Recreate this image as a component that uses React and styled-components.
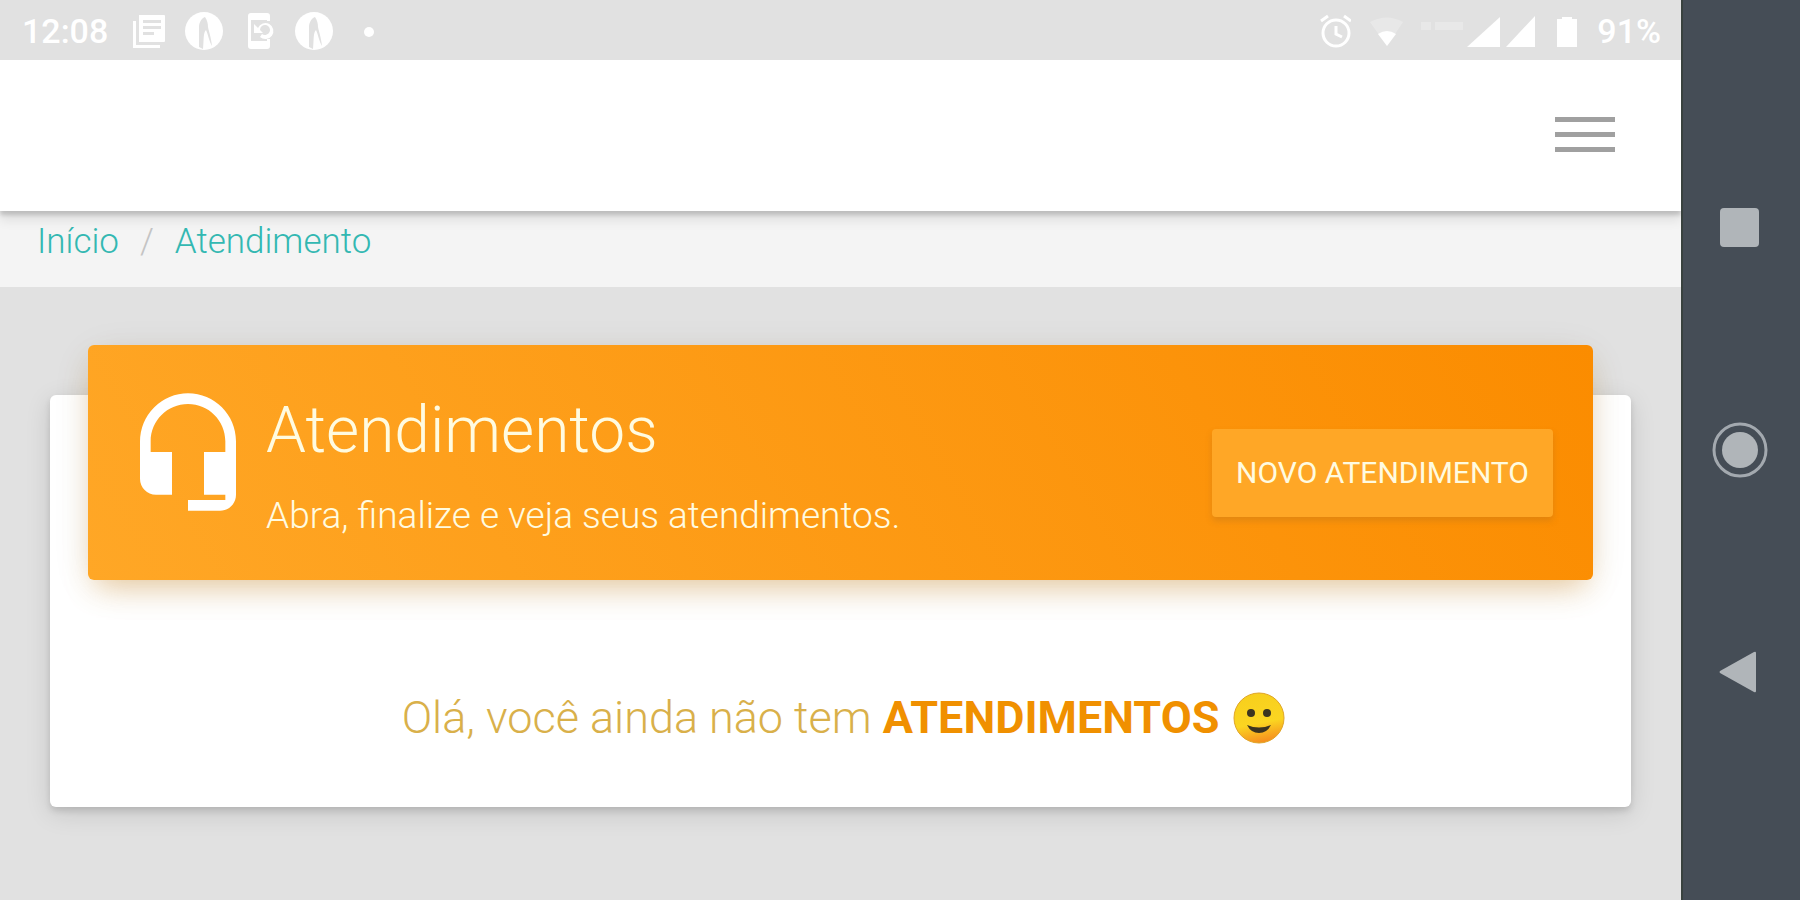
import React from 'react';
import styled, { createGlobalStyle } from 'styled-components';

function StatusBar() {
  return (
    <Status>
      <div className="group left">
        <time>12:08</time>
        <svg width="38" height="38" viewBox="0 0 38 38" aria-hidden="true">
          <path d="M3 9h3v24h24v3H3z" />
          <path
            fillRule="evenodd"
            d="M9 3h25a1 1 0 0 1 1 1v25a1 1 0 0 1-1 1H9zM13 8v3h18V8zM13 14v3h18v-3zM13 20v3h11v-3z"
          />
        </svg>
        <AppBadge />
        <svg width="38" height="38" viewBox="0 0 38 38" aria-hidden="true">
          <path d="M11 1h16a3 3 0 0 1 3 3v5h-3V8H11v21h16v-2h3v7a3 3 0 0 1-3 3H11a3 3 0 0 1-3-3V4a3 3 0 0 1 3-3z" />
          <path d="M14 12l4 4a8 8 0 1 1 2 9l2-3a5 5 0 1 0-2-4l3 3h-9z" />
        </svg>
        <AppBadge />
        <svg width="38" height="38" viewBox="0 0 38 38" aria-hidden="true">
          <circle cx="19" cy="20" r="5" />
        </svg>
      </div>

      <div className="group right">
        <svg width="34" height="34" viewBox="0 0 34 34" aria-hidden="true">
          <g fill="none" stroke="#fff" strokeWidth="3">
            <circle cx="19" cy="19" r="13" />
            <path d="M19 12v8l6 3M4 7l7-5M34 7l-7-5" />
          </g>
        </svg>
        <svg width="34" height="34" viewBox="0 0 34 34" aria-hidden="true">
          <path opacity="0.25" d="M1 8Q18-1 34 8L18 32z" />
          <path d="M9 20q9-6 18 0l-9 12z" />
        </svg>
        <div className="signals">
          <svg width="42" height="34" viewBox="0 0 42 34" aria-hidden="true">
            <path opacity="0.25" d="M0 8h10v8H0zM14 8h28v8H14z" />
          </svg>
          <svg width="34" height="34" viewBox="0 0 34 34" aria-hidden="true">
            <path d="M0 33L33 3v30z" />
          </svg>
          <svg width="34" height="34" viewBox="0 0 34 34" aria-hidden="true">
            <path d="M1 33L30 2v31z" />
          </svg>
        </div>
        <svg width="22" height="34" viewBox="0 0 22 34" aria-hidden="true">
          <path d="M0 5h5V3h10v2h5v28H0z" />
        </svg>
        <span>91%</span>
      </div>
    </Status>
  );
}

function AppBadge() {
  return (
    <svg width="38" height="38" viewBox="0 0 38 38" aria-hidden="true">
      <circle cx="19" cy="19" r="19" />
      <path
        fill="#e1e1e1"
        d="M20 5c-3 1-6 5-6 10v20l4 2c1-9 0-16 3-19 2 4 3 11 6 16-1-9-3-14-4-19 0-4-1-7-3-10z"
      />
    </svg>
  );
}

function Smile() {
  return (
    <svg
      width="52"
      height="52"
      viewBox="0 0 52 52"
      role="img"
      aria-label="sorriso"
    >
      <defs>
        <linearGradient id="face" x1="0.4" y1="0" x2="0.6" y2="1">
          <stop offset="0" stopColor="#f7cf1d" />
          <stop offset="0.6" stopColor="#fbd521" />
          <stop offset="1" stopColor="#f58a1f" />
        </linearGradient>
      </defs>
      <circle
        cx="26"
        cy="26"
        r="25"
        fill="url(#face)"
        stroke="#e0a526"
        strokeWidth="1"
      />
      <circle cx="18" cy="21" r="4" fill="#3b3420" />
      <circle cx="34" cy="21" r="4" fill="#3b3420" />
      <path d="M14 33q12 5 24 0-4 8-12 8t-12-8z" fill="#3b3420" />
    </svg>
  );
}

function App() {
  return (
    <Screen>
      <GlobalStyle />
      <Page>
        <StatusBar />
        <Header>
          <MenuButton type="button" aria-label="Menu">
            <i />
            <i />
            <i />
          </MenuButton>
        </Header>
        <Breadcrumb aria-label="breadcrumb">
          <a href="#inicio">Início</a>
          <span>/</span>
          <a href="#atendimento">Atendimento</a>
        </Breadcrumb>

        <Main>
          <Card>
            <Banner>
              <svg
                width="128"
                height="128"
                viewBox="0 0 24 24"
                aria-hidden="true"
              >
                <path d="M12 1a9 9 0 0 0-9 9v7c0 1.66 1.34 3 3 3h3v-8H5v-2c0-3.87 3.13-7 7-7s7 3.13 7 7v2h-4v8h4v1h-7v2h6c1.66 0 3-1.34 3-3V10c0-4.97-4.03-9-9-9z" />
              </svg>
              <div className="titles">
                <h1>Atendimentos</h1>
                <p>Abra, finalize e veja seus atendimentos.</p>
              </div>
              <NewButton type="button">Novo atendimento</NewButton>
            </Banner>
            <Empty>
              <p>
                Olá, você ainda não tem <strong>ATENDIMENTOS</strong>
              </p>
              <Smile />
            </Empty>
          </Card>
        </Main>
      </Page>

      <NavBar aria-label="Sistema">
        <button type="button" aria-label="Recentes">
          <svg width="56" height="56" viewBox="0 0 56 56">
            <rect x="8" y="8" width="39" height="39" rx="4" />
          </svg>
        </button>
        <button type="button" aria-label="Tela inicial">
          <svg width="56" height="56" viewBox="0 0 56 56">
            <circle cx="28" cy="28" r="18" />
            <circle
              cx="28"
              cy="28"
              r="26"
              fill="none"
              stroke="#a3a9af"
              strokeWidth="3"
            />
          </svg>
        </button>
        <button type="button" aria-label="Voltar">
          <svg width="56" height="56" viewBox="0 0 56 56">
            <path d="M8 27L42 8q2-1 2 1v38q0 2-2 1L8 29q-1-1 0-2z" />
          </svg>
        </button>
      </NavBar>
    </Screen>
  );
}

export default App;

const GlobalStyle = createGlobalStyle`
  * {
    box-sizing: border-box;
    margin: 0;
    padding: 0;
  }

  body {
    font-family: Roboto, 'Liberation Sans', sans-serif;
    font-weight: 300;
    background-color: #e1e1e1;
  }

  button {
    border: none;
    font-family: inherit;
    cursor: pointer;
  }

  svg {
    display: block;
    flex-shrink: 0;
  }
`;

const Screen = styled.div`
  display: flex;
  min-height: 100vh;
`;

const Page = styled.div`
  flex: 1;
  min-width: 0;
  display: flex;
  flex-direction: column;
`;

const Status = styled.div`
  display: flex;
  justify-content: space-between;
  padding: 11px 20px 9px 22px;
  color: #fff;
  fill: #fff;
  font-size: 34px;
  font-weight: 500;
  line-height: 40px;

  .group {
    display: flex;
    align-items: center;
  }

  .left {
    gap: 17px;

    time {
      margin-right: 5px;
    }
  }

  .right {
    gap: 18px;
  }

  .signals {
    display: flex;
    gap: 4px;
  }
`;

const Header = styled.header`
  position: relative;
  z-index: 1;
  display: flex;
  justify-content: flex-end;
  padding: 49px 61px 51px;
  background-color: #fff;
  box-shadow: 0 4px 4px rgba(0, 0, 0, 0.16), 0 10px 10px rgba(0, 0, 0, 0.08);
`;

const MenuButton = styled.button`
  display: flex;
  flex-direction: column;
  justify-content: center;
  gap: 10px;
  width: 70px;
  height: 51px;
  padding: 0 5px;
  background-color: transparent;

  i {
    height: 5px;
    background-color: #a0a0a0;
  }
`;

const Breadcrumb = styled.nav`
  display: flex;
  gap: 21px;
  padding: 10px 37px 24px;
  background-color: #f4f4f4;
  font-size: 35px;
  line-height: 42px;

  a {
    color: #33b8b2;
    text-decoration: none;
  }

  span {
    color: #c4c4c4;
  }
`;

const Main = styled.main`
  flex: 1;
  padding: 108px 50px 92px;
  background-color: #e1e1e1;
`;

const Card = styled.section`
  display: flow-root;
  padding: 0 38px;
  background-color: #fff;
  border-radius: 6px;
  box-shadow: 0 4px 6px rgba(0, 0, 0, 0.12), 0 6px 26px rgba(0, 0, 0, 0.12);
`;

const Banner = styled.div`
  display: flex;
  align-items: flex-start;
  gap: 14px;
  margin-top: -50px;
  padding: 43px 40px 42px 36px;
  color: #fffbe0;
  background: linear-gradient(60deg, #ffa726, #fb8c00);
  border-radius: 6px;
  box-shadow: 0 8px 40px -6px rgba(0, 0, 0, 0.12),
    0 14px 28px -8px rgba(240, 160, 40, 0.4);

  svg {
    fill: #fff;
  }

  .titles {
    flex: 1;

    h1 {
      font-size: 64px;
      font-weight: 300;
      line-height: 86px;
    }

    p {
      margin-top: 20px;
      font-size: 37px;
      line-height: 44px;
    }
  }
`;

const NewButton = styled.button`
  align-self: center;
  margin-top: 20px;
  padding: 22px 24px;
  color: #fffbe0;
  background-color: #ffa726;
  border-radius: 4px;
  box-shadow: 0 4px 6px rgba(150, 100, 40, 0.25);
  font-size: 30px;
  font-weight: 400;
  line-height: 44px;
  text-transform: uppercase;
`;

const Empty = styled.div`
  display: flex;
  align-items: center;
  justify-content: center;
  gap: 14px;
  padding: 112px 0 63px 6px;
  color: #d9b04a;
  font-size: 45px;
  line-height: 52px;

  strong {
    color: #f09000;
    font-weight: 700;
  }
`;

const NavBar = styled.nav`
  position: relative;
  z-index: 2;
  display: flex;
  flex-direction: column;
  align-items: center;
  justify-content: center;
  gap: 166px;
  width: 119px;
  padding-right: 4px;
  background-color: #454d56;
  border-left: 2px solid #39423f;

  button {
    background-color: transparent;
  }

  svg {
    fill: #b0b5b9;
  }
`;
